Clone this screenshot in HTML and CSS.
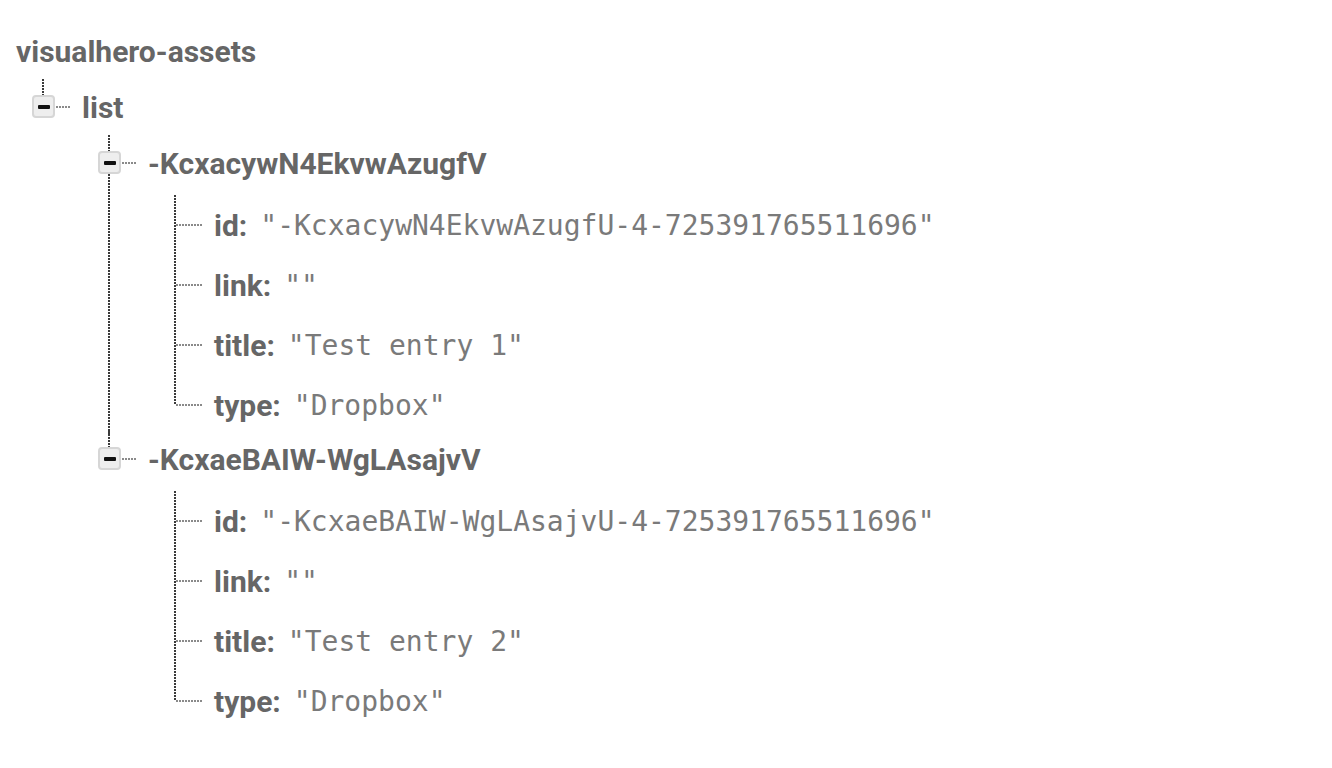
FILE: index.html
```html
<!DOCTYPE html>
<html>
<head>
<meta charset="utf-8">
<link rel="stylesheet" href="styles.css">
</head>
<body>
<div class="tree">
  <div class="root-row"><span class="key">visualhero-assets</span></div>
  <ul class="level level-root">
    <li class="node branch last">
      <div class="row branch-row"><span class="toggle"><span class="minus"></span></span><span class="key">list</span></div>
      <ul class="level">
        <li class="node branch">
          <div class="row branch-row"><span class="toggle"><span class="minus"></span></span><span class="key">-KcxacywN4EkvwAzugfV</span></div>
          <ul class="level leaves">
            <li class="node leaf"><div class="row leaf-row"><span class="key">id:</span><span class="val">"-KcxacywN4EkvwAzugfU-4-725391765511696"</span></div></li>
            <li class="node leaf"><div class="row leaf-row"><span class="key">link:</span><span class="val">""</span></div></li>
            <li class="node leaf"><div class="row leaf-row"><span class="key">title:</span><span class="val">"Test entry 1"</span></div></li>
            <li class="node leaf last"><div class="row leaf-row"><span class="key">type:</span><span class="val">"Dropbox"</span></div></li>
          </ul>
        </li>
        <li class="node branch last">
          <div class="row branch-row"><span class="toggle"><span class="minus"></span></span><span class="key">-KcxaeBAIW-WgLAsajvV</span></div>
          <ul class="level leaves">
            <li class="node leaf"><div class="row leaf-row"><span class="key">id:</span><span class="val">"-KcxaeBAIW-WgLAsajvU-4-725391765511696"</span></div></li>
            <li class="node leaf"><div class="row leaf-row"><span class="key">link:</span><span class="val">""</span></div></li>
            <li class="node leaf"><div class="row leaf-row"><span class="key">title:</span><span class="val">"Test entry 2"</span></div></li>
            <li class="node leaf last"><div class="row leaf-row"><span class="key">type:</span><span class="val">"Dropbox"</span></div></li>
          </ul>
        </li>
      </ul>
    </li>
  </ul>
</div>
</body>
</html>
```

FILE: styles.css
```css
html, body {
  margin: 0;
  padding: 0;
  background: #ffffff;
}

body {
  font-family: Roboto, "Liberation Sans", sans-serif;
  color: #666666;
}

.tree {
  padding: 23px 0 0 16px;
}

.root-row {
  height: 56px;
  display: flex;
  align-items: center;
}

.key {
  font-weight: 700;
  font-size: 30px;
  color: #666666;
  letter-spacing: 0;
}

.val {
  font-family: "DejaVu Sans Mono", "Liberation Mono", monospace;
  font-size: 28px;
  color: #7a7a7a;
  margin-left: 13px;
  font-weight: 400;
}

.level {
  list-style: none;
  margin: 0 0 0 26px;
  padding: 0;
}

.level .level {
  margin-left: 66px;
}

.level.leaves {
  margin-top: 4px;
  margin-bottom: -4px;
}

.node {
  position: relative;
}

/* vertical connector */
.node::before {
  content: "";
  position: absolute;
  left: 0;
  top: 0;
  bottom: 0;
  width: 2px;
  background: repeating-linear-gradient(to bottom, #3a3a3a 0 2px, transparent 2px 3px);
}

.branch.last::before {
  bottom: auto;
  height: 28px;
}

.leaf.last::before {
  bottom: auto;
  height: 30px;
}

.row {
  display: flex;
  align-items: center;
  padding-left: 40px;
  position: relative;
}

/* horizontal connector */
.row::before {
  content: "";
  position: absolute;
  left: 2px;
  top: 50%;
  width: 27px;
  height: 2px;
  margin-top: -1px;
  background: repeating-linear-gradient(to right, #8a8a8a 0 2px, transparent 2px 3px);
}

.branch-row {
  height: 56px;
}

.leaf-row {
  height: 60px;
}

.toggle {
  position: absolute;
  left: -10px;
  top: 50%;
  margin-top: -12px;
  width: 19px;
  height: 19px;
  border: 2px solid #d6d6d6;
  border-radius: 4px;
  background: #eeeeee;
  display: flex;
  align-items: center;
  justify-content: center;
  z-index: 1;
}

.minus {
  width: 12px;
  height: 4px;
  background: #111111;
  border-radius: 1px;
}
```
